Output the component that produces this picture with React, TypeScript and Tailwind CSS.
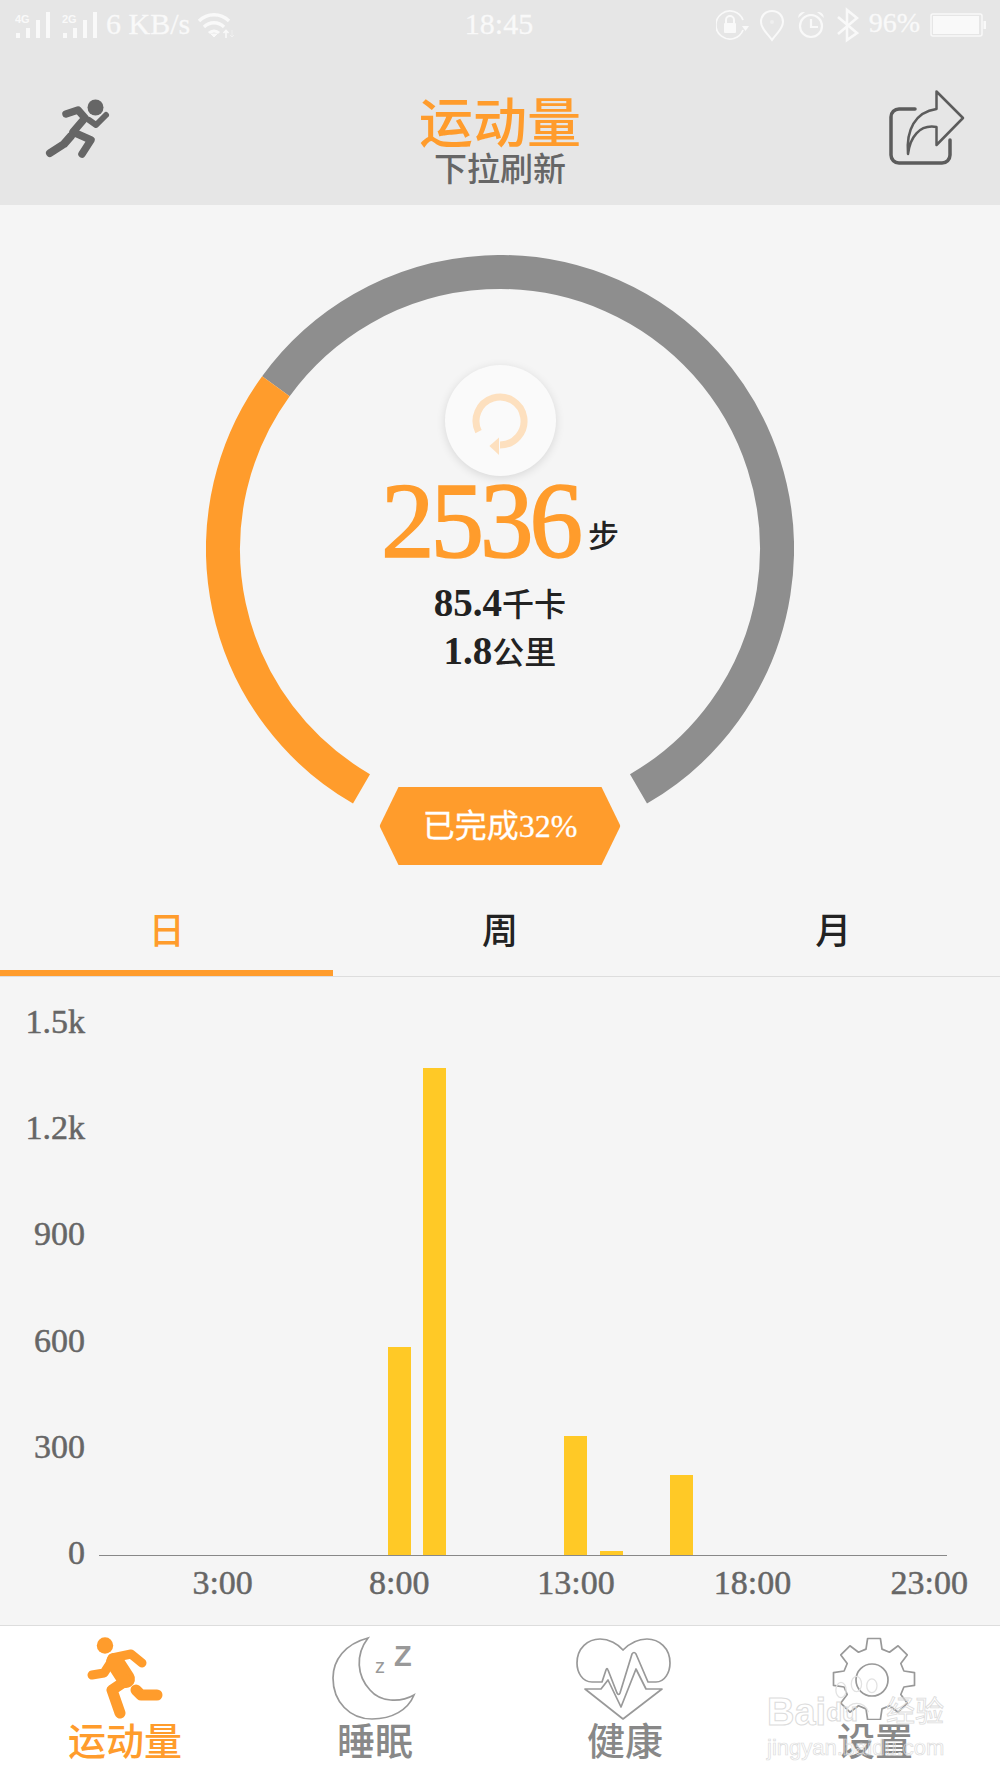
const ORANGE = '#ff9c2c';

function polar(r: number, deg: number) {
  const rad = (deg * Math.PI) / 180;
  return `${(294 + r * Math.sin(rad)).toFixed(2)} ${(294 - r * Math.cos(rad)).toFixed(2)}`;
}

function arc(from: number, to: number) {
  return `M${polar(277, from)} A277 277 0 ${to - from > 180 ? 1 : 0} 1 ${polar(277, to)}`;
}

function gearPath() {
  const cx = 44;
  const cy = 49;
  const pts: string[] = [];
  for (let i = 0; i < 8; i++) {
    const a = (i * 45 * Math.PI) / 180;
    const p = (r: number, d: number) => {
      const t = a + (d * Math.PI) / 180;
      return `${(cx + r * Math.sin(t)).toFixed(1)} ${(cy - r * Math.cos(t)).toFixed(1)}`;
    };
    pts.push(p(31, -15), p(41, -9), p(41, 9), p(31, 15));
  }
  return `M${pts.join(' L')} Z`;
}

function Signal({ label, className }: { label: string; className?: string }) {
  return (
    <svg viewBox="0 0 36 48" className={`w-[36px] h-[48px] ${className ?? ''}`} fill="#f9f9f9">
      <text x="0" y="23" fontSize="11" fontWeight="700" fontFamily="Liberation Sans">{label}</text>
      <rect x="1" y="33" width="4" height="5" />
      <rect x="11" y="28" width="4" height="10" />
      <rect x="21" y="20" width="4" height="18" />
      <rect x="31" y="12" width="4" height="26" />
    </svg>
  );
}

function StatusBar() {
  return (
    <div className="grid grid-cols-[1fr_auto_1fr] items-center h-[48px] text-[#f9f9f9] [-webkit-text-stroke:0.3px_#f9f9f9]">
      <div className="flex items-center pl-[15px]">
        <Signal label="4G" />
        <Signal label="2G" className="ml-[11px]" />
        <span className="ml-[8px] text-[30px] leading-[48px] whitespace-nowrap">6 KB/s</span>
        <svg viewBox="0 0 38 48" className="ml-[6px] w-[38px] h-[48px]" fill="none" stroke="#f9f9f9">
          <path d="M3 21 A21 21 0 0 1 33 21" strokeWidth="3.4" />
          <path d="M8 27 A14 14 0 0 1 28 27" strokeWidth="3.4" />
          <path d="M13 33 A7 7 0 0 1 23 33" strokeWidth="3" />
          <path d="M15 34 L18 37 L21 34 Z" fill="#f9f9f9" strokeWidth="1" />
          <path d="M30 38 V31 M27.5 33 L30 30.5 L32.5 33" strokeWidth="1.6" />
          <path d="M36 30 V37 M34 35 L36 37 L38 35" strokeWidth="1" opacity="0.5" />
        </svg>
      </div>
      <span className="-ml-[2px] text-[30px] leading-[48px]">18:45</span>
      <div className="flex items-center justify-end pr-[14px]">
        <svg viewBox="0 0 34 48" className="w-[34px] h-[48px]" fill="none" stroke="#f9f9f9">
          <path d="M27 30 A14 14 0 1 1 27 20" strokeWidth="1.7" />
          <path d="M26 26 H33 L29.5 31 Z" fill="#f9f9f9" stroke="none" />
          <rect x="8" y="23" width="12" height="10" rx="1" fill="#f9f9f9" stroke="none" />
          <path d="M10 23 V20 A4 4 0 0 1 18 20 V23" strokeWidth="2" />
        </svg>
        <svg viewBox="0 0 25 48" className="ml-[10px] w-[25px] h-[48px]" fill="none" stroke="#f9f9f9">
          <path d="M12 11 C5 11 1 16 1 22 C1 29 8 34 12 40 C16 34 23 29 23 22 C23 16 19 11 12 11 Z" strokeWidth="2" />
          <circle cx="12" cy="22" r="2" fill="#efefef" stroke="none" />
        </svg>
        <svg viewBox="0 0 28 48" className="ml-[12px] w-[28px] h-[48px]" fill="none" stroke="#f9f9f9">
          <circle cx="14" cy="26" r="11" strokeWidth="2.2" />
          <path d="M14 19 V27 H21" strokeWidth="2.2" />
          <path d="M1 18 A6 6 0 0 1 8 12 Z M27 18 A6 6 0 0 0 20 12 Z" fill="#f9f9f9" stroke="none" />
        </svg>
        <svg viewBox="0 0 23 48" className="ml-[11px] w-[23px] h-[48px]" fill="none" stroke="#f9f9f9">
          <path d="M2 17 L21 33 L11 40 V10 L21 18 L2 34" strokeWidth="2.6" />
        </svg>
        <span className="ml-[10px] text-[28px] leading-[48px] -mt-[3px]">96%</span>
        <svg viewBox="0 0 56 48" className="ml-[10px] w-[56px] h-[48px]" fill="#f9f9f9">
          <rect x="1" y="14" width="51" height="22" rx="2" fill="none" stroke="#f9f9f9" strokeWidth="1.5" />
          <rect x="3" y="16" width="46" height="18" />
          <rect x="53.5" y="21" width="2.5" height="8" />
        </svg>
      </div>
    </div>
  );
}

function Header() {
  return (
    <div className="bg-[#e6e6e6] h-[205px]">
      <StatusBar />
      <div className="flex">
        <div className="w-[125px] pl-[30px] pt-[37px]">
          <svg viewBox="0 0 90 85" className="w-[90px] h-[85px]" fill="none" stroke="#666" strokeWidth="7.5" strokeLinecap="round" strokeLinejoin="round">
            <circle cx="65.5" cy="22.5" r="8" fill="#666" stroke="none" />
            <path d="M36 29 L48 25 L55 33 L43 47 L61 55 L52 69" />
            <path d="M41 51 L34 59 L20 68" strokeWidth="8" />
            <path d="M59 35 L66 40 L76 30" strokeWidth="6" />
          </svg>
        </div>
        <div className="flex-1 flex flex-col items-center pt-[47px]">
          <span className="text-[54px] leading-[60px] font-medium text-[#ff9c2c]">运动量</span>
          <span className="-mt-[3px] text-[33px] leading-[36px] font-medium text-[#666]">下拉刷新</span>
        </div>
        <div className="w-[125px] pt-[32px]">
          <svg viewBox="0 0 100 95" className="w-[100px] h-[95px]" fill="none" stroke="#5c5c5c" strokeLinejoin="round">
            <path d="M40 29 H24 A8 8 0 0 0 16 37 V75 A8 8 0 0 0 24 83 H67 A8 8 0 0 0 75 75 V60" strokeWidth="3.5" strokeLinecap="round" />
            <path d="M33 74 C31 50 40 32 61.5 29 V11.5 L88 38 L61.5 65 V47 C44 44 35 58 33 74 Z" strokeWidth="2.5" />
          </svg>
        </div>
      </div>
    </div>
  );
}

function Ring() {
  return (
    <div className="h-[700px] pt-[50px] flex justify-center">
      <div className="relative w-[588px] h-[588px]">
        <svg viewBox="0 0 588 588" className="absolute inset-0 w-[588px] h-[588px]" fill="none" strokeWidth="34">
          <path d={arc(306, 510)} stroke="#8e8e8e" />
          <path d={arc(210, 306)} stroke={ORANGE} />
        </svg>
        <div className="absolute inset-0 flex flex-col items-center pt-[110px]">
          <div className="relative z-10 w-[111px] h-[111px] rounded-full bg-[#fafafa] shadow-[0_2px_10px_rgba(0,0,0,0.12)] flex items-center justify-center">
            <svg viewBox="0 0 70 70" className="w-[70px] h-[70px]" fill="none" stroke="#fde0bf">
              <path d="M13.5 45.6 A24 24 0 1 1 35 59" strokeWidth="7" />
              <path d="M24.4 60 L34 51.6 V69 Z" fill="#fde0bf" stroke="none" />
            </svg>
          </div>
          <div className="-mt-[5px] flex items-end">
            <span className="text-[107px] leading-[100px] tracking-[-4px] text-[#ff9c2c] [-webkit-text-stroke:1.6px_#ff9c2c]">2536</span>
            <span className="ml-[9px] mb-[14px] text-[31px] leading-[40px] font-medium text-[#222]">步</span>
          </div>
          <div className="mt-[9px] text-[32px] leading-[45px] font-medium text-[#222]"><span className="text-[39px] font-bold">85.4</span>千卡</div>
          <div className="text-[32px] leading-[45px] font-medium text-[#222]"><span className="text-[39px] font-bold">1.8</span>公里</div>
        </div>
        <div className="absolute top-[532px] left-1/2 -translate-x-1/2 w-[241px] h-[78px] bg-[#ff9c2c] [clip-path:polygon(0_50%,19px_0,222px_0,100%_50%,222px_100%,19px_100%)] flex items-center justify-center text-white text-[32px] [-webkit-text-stroke:0.3px_#ffffff]">
          已完成32%
        </div>
      </div>
    </div>
  );
}

function Tabs() {
  const tabs = ['日', '周', '月'];
  return (
    <div className="flex border-b border-[#dddddd]">
      {tabs.map((t, i) => (
        <div
          key={t}
          className={`flex-1 h-[71px] pb-[11px] border-b-[6px] flex items-center justify-center text-[36px] font-medium ${
            i === 0 ? 'border-[#ff9c2c] text-[#ff9c2c]' : 'border-transparent text-[#222]'
          }`}
        >
          {t}
        </div>
      ))}
    </div>
  );
}

// pixel height per hour slot
const bars: Record<number, number> = { 8: 208, 9: 487, 13: 119, 14: 4, 16: 80 };
const hours = Array.from({ length: 24 }, (_, i) => i);

function Chart() {
  return (
    <div className="flex h-[648px] text-[#666] text-[34px] [-webkit-text-stroke:0.5px_#666666]">
      <div className="w-[85px] h-[596px] pt-[25px] flex flex-col justify-between text-right leading-[40px]">
        {['1.5k', '1.2k', '900', '600', '300', '0'].map((l) => (
          <span key={l}>{l}</span>
        ))}
      </div>
      <div className="ml-[14px] w-[848px]">
        <div className="flex items-end h-[579px] border-b border-[#888]">
          {hours.map((h) => (
            <div key={h} className="flex-1 flex justify-center">
              {bars[h] && <div className="w-[23px] bg-[#ffc926]" style={{ height: bars[h] }} />}
            </div>
          ))}
        </div>
        <div className="flex mt-[7px] leading-[40px]">
          {hours.map((h) => (
            <div key={h} className="flex-1 w-0 min-w-0 flex justify-center whitespace-nowrap">
              {h % 5 === 3 && <span>{h}:00</span>}
            </div>
          ))}
        </div>
      </div>
    </div>
  );
}

function BottomNav() {
  return (
    <div className="flex h-[153px] bg-white border-t border-[#dddddd] text-[38px] leading-[44px] font-medium text-[#888]">
      <div className="flex-1 flex flex-col items-center pt-[4px] text-[#ff9c2c]">
        <svg viewBox="0 0 110 90" className="w-[110px] h-[90px]" fill="none" stroke="#ff9c2c" strokeLinecap="round" strokeLinejoin="round">
          <circle cx="35" cy="15.5" r="8.2" fill="#ff9c2c" stroke="none" />
          <path d="M22 45 L34 43 L43 29" strokeWidth="9" />
          <path d="M42 28 L61 24 L72 33" strokeWidth="9" />
          <path d="M45 32 L56 49" strokeWidth="18" />
          <path d="M57 50 L42 60 L50 83" strokeWidth="11" />
          <path d="M66 60 L71 65 L87 65" strokeWidth="11" />
        </svg>
        <span>运动量</span>
      </div>
      <div className="flex-1 flex flex-col items-center pt-[4px]">
        <svg viewBox="0 0 90 90" className="w-[90px] h-[90px]" fill="none" stroke="#999" strokeWidth="1.7">
          <path d="M38 8 C15 14 3 30 3 48 C3 72 20 89 42 89 C62 89 78 80 84 65 C70 73 50 72 40 60 C27 46 25 25 38 8 Z" />
          <text x="64" y="36" fontSize="29" fontWeight="700" fontFamily="Liberation Sans" fill="#999" stroke="none">Z</text>
          <text x="45" y="43" fontSize="20" fontFamily="Liberation Sans" fill="#999" stroke="none">z</text>
        </svg>
        <span>睡眠</span>
      </div>
      <div className="flex-1 flex flex-col items-center pt-[4px]">
        <svg viewBox="0 0 130 90" className="w-[130px] h-[90px]" fill="none" stroke="#999" strokeWidth="1.7" strokeLinejoin="round">
          <path d="M42 52 H32 C22 52 17 42 17 33 C17 18 28 9 40 9 C49 9 58 14 63 20 C69 14 78 9 87 9 C99 9 110 18 110 33 C110 42 105 52 96 52 H88 L76 24 Q74 21 72 24 L60 63 Q59 66 57 63 L48 40 Q47 37 46 40 Z" />
          <path d="M25 59 H41 L48 50 L61 77 L76 39 L86 59 H102 L63 89 Z" />
        </svg>
        <span>健康</span>
      </div>
      <div className="flex-1 flex flex-col items-center pt-[4px]">
        <svg viewBox="0 0 90 90" className="w-[90px] h-[90px]" fill="none" stroke="#999" strokeWidth="1.7" strokeLinejoin="round">
          <path d={gearPath()} />
          <circle cx="42" cy="50" r="16" />
        </svg>
        <span>设置</span>
      </div>
    </div>
  );
}

function Watermark() {
  return (
    <div className="absolute left-[767px] top-[1692px] w-[190px] pointer-events-none font-['Liberation_Sans','Noto_Sans_CJK_SC',sans-serif]">
      <svg viewBox="0 0 70 50" className="absolute left-[62px] -top-[18px] w-[60px] h-[44px]" fill="none" stroke="#e2e2e2" strokeWidth="1.5">
        <ellipse cx="14" cy="18" rx="6" ry="9" />
        <ellipse cx="32" cy="11" rx="6" ry="9" />
        <ellipse cx="50" cy="13" rx="6" ry="8" />
        <path d="M20 44 C22 30 42 30 46 44" />
      </svg>
      <div className="flex items-end h-[40px] leading-[40px] whitespace-nowrap text-transparent [-webkit-text-stroke:1px_#dcdcdc]">
        <span className="text-[38px] font-bold">Bai</span>
        <span className="text-[26px] font-bold">du</span>
        <span className="ml-[28px] text-[29px] [-webkit-text-stroke:0.8px_#dcdcdc]">经验</span>
      </div>
      <div className="mt-[3px] text-[22px] leading-[26px] whitespace-nowrap text-transparent [-webkit-text-stroke:0.7px_#dcdcdc]">jingyan.baidu.com</div>
    </div>
  );
}

export default function App() {
  return (
    <div className="relative w-[1000px] h-[1778px] overflow-hidden bg-[#f5f5f5] font-['Liberation_Serif','Noto_Sans_CJK_SC',serif]">
      <Header />
      <Ring />
      <Tabs />
      <Chart />
      <BottomNav />
      <Watermark />
    </div>
  );
}
